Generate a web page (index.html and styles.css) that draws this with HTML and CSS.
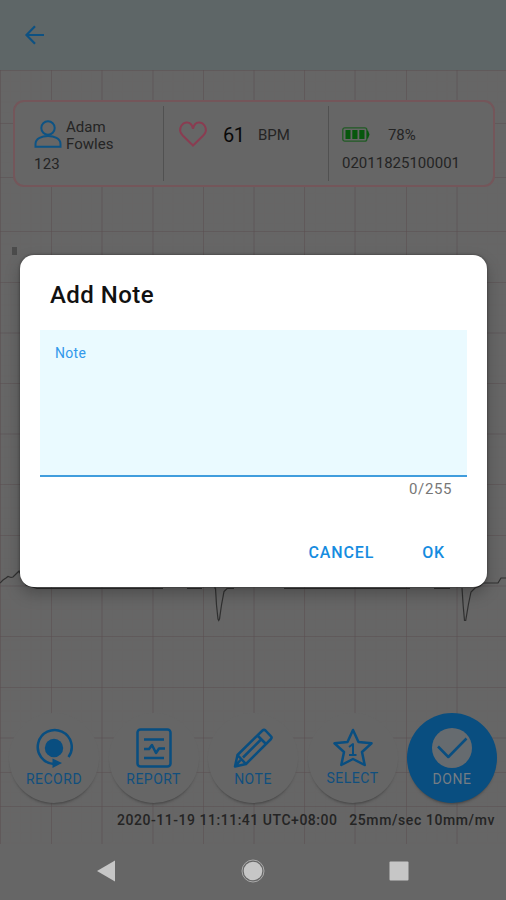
FILE: index.html
```
<!DOCTYPE html>
<html lang="en">
<head>
<meta charset="utf-8">
<title>ECG - Add Note</title>
<link rel="stylesheet" href="styles.css">
</head>
<body>
<div class="screen">
  <svg class="paper" viewBox="0 0 506 900" aria-hidden="true">
    <defs>
      <pattern id="fine" width="10.15" height="10.15" patternUnits="userSpaceOnUse">
        <path d="M.5 0V10.15M0 .5H10.15" class="fine-line"/>
      </pattern>
    </defs>
    <rect y="70" width="506" height="774" fill="url(#fine)"/>
    <path class="grid-line" d="M.5 70V844M51.5 70V844M102 70V844M153 70V844M203.5 70V844M254 70V844M304.5 70V844M355 70V844M406.5 70V844M457 70V844M0 70.5H506M0 123.5H506M0 177.5H506M0 231.5H506M0 282.5H506M0 333H506M0 383.5H506M0 434H506M0 484.5H506M0 535.5H506M0 586H506M0 636.5H506M0 687.5H506M0 738H506M0 772.5H506M0 806.5H506"/>
    <rect class="lead" x="12" y="247" width="5" height="8"/>
    <path class="trace" d="M0 583 3 580 6 578 8 576.5 11 577.5 13 577 17 573 19 571 26 585 37 588.5H163M187 588.5H202M214 588H215.500L216.500 605 218 619 218.700 620.500 219.500 619 221.500 605 224 591.500 227 588.500H234M284 588.500H410M434 588.500H450M462 588 463.200 606 464.500 620.500H465.700L468.500 604 471 592 475 588 480 586 483 583H498L501 578H506"/>
  </svg>

  <header class="bar">
    <svg class="back" viewBox="0 0 20 20"><path d="M19 10H2M10 1.300 1.500 10 10 18.700"/></svg>
  </header>

  <section class="card">
    <div class="cell patient">
      <div class="row">
        <svg class="person" viewBox="0 0 28 28"><circle cx="14" cy="8" r="6.700"/><path d="M1.500 26.700V24C1.500 18.500 8 16 14 16S26.500 18.500 26.500 24V26.700Z"/></svg>
        <div class="name">Adam<br>Fowles</div>
      </div>
      <div class="pid">123</div>
    </div>
    <div class="cell rate">
      <svg class="heart" viewBox="0 0 28 26"><path d="M14 24.500 4 14.800C.8 11.500.5 7.500 2.500 4.500 4.800 1 9.500.600 12 3.200 13.200 4.500 13.600 6 14 7.800 14.400 6 14.800 4.500 16 3.200 18.500.600 23.200 1 25.500 4.500 27.500 7.500 27.200 11.500 24 14.800Z"/></svg>
      <span class="bpm">61</span><span class="unit">BPM</span>
    </div>
    <div class="cell device">
      <div class="row power">
        <svg class="battery" viewBox="0 0 28 15"><rect class="case" x=".8" y=".8" width="24" height="13.400" rx="2"/><path class="charge" d="M3.500 3H8.500V12H3.500ZM10.300 3H15.500V12H10.300ZM17.300 3H22.500V12H17.300ZM25 3.500H26L27.500 7.500 26 11.500H25Z"/></svg>
        <span class="percent">78%</span>
      </div>
      <div class="serial">02011825100001</div>
    </div>
  </section>

  <div class="trace-space"></div>

  <nav class="actions">
    <div class="action">
      <svg viewBox="0 0 40 40"><circle class="solid" cx="20" cy="20" r="9.200"/><path d="M34.500 29A17 17 0 1 0 20 36"/><path class="solid" d="M18.500 30.500 28 35 18.500 40Z"/></svg>
      <span>RECORD</span>
    </div>
    <div class="action">
      <svg viewBox="0 0 40 40"><rect x="3.500" y="1.500" width="33" height="37" rx="3"/><path d="M10 11.500H30M10 30H30M10 21H15L18 17 22 25 25 20.500H31"/></svg>
      <span>REPORT</span>
    </div>
    <div class="action">
      <svg viewBox="0 0 40 40"><path d="M2 38.500 4.500 27 29.500 2.500Q31 1.200 32.500 2.500L38 8.300Q39.200 9.500 38 11L13 36ZM4.500 27 13 36M24.500 7.500 33 16M27.500 12 10 29.500M2 38.500 7.500 32"/></svg>
      <span>NOTE</span>
    </div>
    <div class="action select">
      <svg viewBox="0 0 40 40"><path d="M20 2 25.500 14 38.500 15.300 29 24 31.700 37 20 31 8.300 37 11 24 1.500 15.300 14.500 14Z"/><path d="M16 19 20 16V27.500M16 27H23.500" class="one"/></svg>
      <span>SELECT</span>
    </div>
    <div class="action done">
      <svg viewBox="0 0 40 40"><circle cx="20" cy="20" r="20"/><path d="M6 18.500 16.300 29 34.500 10.500"/></svg>
      <span>DONE</span>
    </div>
  </nav>

  <footer class="meta"><span class="stamp">2020-11-19 11:11:41 UTC+08:00</span><span class="scale">25mm/sec 10mm/mv</span></footer>

  <div class="system">
    <svg viewBox="0 0 24 24"><path d="M3 12 21 1.500V22.500Z"/></svg>
    <svg viewBox="0 0 24 24"><circle cx="12" cy="12" r="9.300"/><circle class="ring" cx="12" cy="12" r="11"/></svg>
    <svg viewBox="0 0 24 24"><rect x="2.500" y="2.500" width="19" height="19" rx="1"/></svg>
  </div>

  <div class="dialog" role="dialog">
    <h1>Add Note</h1>
    <div class="field"><span>Note</span></div>
    <div class="count">0/255</div>
    <div class="buttons"><span class="cancel">CANCEL</span><span class="ok">OK</span></div>
  </div>
</div>
</body>
</html>
```
FILE: styles.css
```
* { box-sizing: border-box; }
body { margin: 0; font-family: Roboto, "Liberation Sans", sans-serif; }
svg { display: block; fill: none; overflow: visible; flex: none; }
span { white-space: nowrap; }

.screen {
  position: relative;
  display: flex;
  flex-direction: column;
  width: 506px;
  height: 900px;
  overflow: hidden;
  background: #666;
  color: #242424;
}
.paper { position: absolute; inset: 0; width: 506px; height: 900px; }
.fine-line { stroke: #685f60; stroke-width: 1; opacity: .2; }
.grid-line { stroke: #5a4e50; stroke-width: 1; opacity: .5; }
.lead { fill: #4b4b4b; }
.trace { stroke: #303030; stroke-width: 1.2; }

.bar { position: relative; height: 70px; padding: 25px; background: #5e6667; flex: none; }
.back { width: 20px; height: 20px; stroke: #0d5182; stroke-width: 2.2; }

.card {
  position: relative;
  display: grid;
  grid-template-columns: 148px 165px 1fr;
  height: 87px;
  margin: 30px 11px 0 13px;
  padding: 4px 0;
  border: 2px solid #74565a;
  border-radius: 11px;
  background: #666;
  flex: none;
}
.cell + .cell { border-left: 1px solid #515151; }
.row { display: flex; }
.patient { padding: 13px 0 0 19px; }
.person { width: 28px; height: 28px; margin-top: 1px; stroke: #0d5384; stroke-width: 2; }
.name { margin-left: 4px; font-size: 15px; line-height: 17px; letter-spacing: .05px; }
.pid { font-size: 15px; line-height: 18px; margin-top: 2px; letter-spacing: .2px; }
.rate { display: flex; align-items: flex-start; padding: 15px 0 0 15px; }
.heart { width: 28px; height: 26px; stroke: #8a3c51; stroke-width: 2; }
.bpm { margin: 2px 0 0 16px; color: #090909; font-size: 20px; line-height: 24px; width: 35px; letter-spacing: -.4px; }
.unit { margin-top: 1px; font-size: 15px; line-height: 26px; }
.device { padding: 17px 0 0 13px; }
.power { align-items: center; height: 24px; }
.battery { width: 28px; height: 15px; margin-top: -1px; }
.case { stroke: #205b24; stroke-width: 1.3; }
.charge { fill: #07570d; }
.percent { margin: 0 0 0 18px; font-size: 15px; line-height: 22px; letter-spacing: -.1px; }
.serial { margin-top: 7px; font-size: 15px; line-height: 18px; }

.trace-space { flex: 1; }
.actions { position: relative; display: flex; justify-content: space-between; padding: 0 9px; height: 91px; flex: none; }
.action {
  width: 90px;
  height: 90px;
  padding-top: 15px;
  border-radius: 50%;
  background: #666;
  box-shadow: 0 3px 3px -2px #404040;
  color: #104f7e;
  display: flex;
  flex-direction: column;
  align-items: center;
}
.action svg { width: 40px; height: 40px; stroke: #094e80; stroke-width: 2.5; stroke-linejoin: round; }
.action .solid { fill: #094e80; stroke: none; }
.action span { font-size: 14px; line-height: 20px; letter-spacing: .5px; margin-top: 1px; }
.action.select span { margin-top: 0; }
.action .one { stroke-width: 2; }
.action.done { background: #094e80; color: #747d84; }
.action.done circle { fill: #666b6f; stroke: none; }

.meta { position: relative; display: flex; justify-content: space-between; padding: 6px 11px 0 117px; height: 41px; font-size: 14px; line-height: 20px; font-weight: 500; flex: none; }
.stamp { letter-spacing: .53px; }
.scale { letter-spacing: .6px; }
.system { position: relative; display: flex; justify-content: space-between; padding: 14px 95px 0 94px; height: 55px; background: #666; flex: none; }
.system svg { width: 24px; height: 24px; fill: #c6c6c6; }
.system .ring { fill: none; stroke: #aaa; stroke-width: 1; }

.dialog {
  position: absolute;
  left: 20px;
  top: 255px;
  width: 467px;
  height: 332px;
  padding: 24px 20px 0;
  border-radius: 14px;
  background: #fff;
  box-shadow: 0 7px 15px rgba(0,0,0,.25), 0 0 3px rgba(0,0,0,.4);
}
.dialog h1 { margin: 0 10px; font-size: 24px; line-height: 32px; font-weight: 500; color: #111; letter-spacing: .45px; }
.field { height: 147px; margin-top: 19px; padding: 13px 15px; border-bottom: 2px solid #409ddd; background: #eafaff; color: #3298eb; font-size: 14px; line-height: 20px; letter-spacing: .3px; }
.count { padding-right: 15px; text-align: right; color: #777; font-size: 15px; line-height: 25px; letter-spacing: .6px; }
.buttons { display: flex; justify-content: flex-end; gap: 48px; margin-top: 39px; padding-right: 22px; color: #168ce0; font-size: 16px; line-height: 24px; font-weight: 500; letter-spacing: .85px; }
```
